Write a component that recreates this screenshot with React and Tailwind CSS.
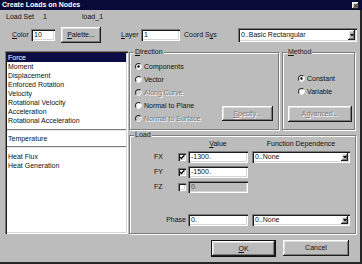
import React from "react";

const SUNKEN =
  "shadow-[inset_1px_1px_0_#7b7b7b,inset_2px_2px_0_#1c1c1c,inset_-1px_-1px_0_#ffffff,inset_-2px_-2px_0_#d6d6d6]";
const RAISED =
  "shadow-[inset_-1px_-1px_0_#1c1c1c,inset_1px_1px_0_#ffffff,inset_-2px_-2px_0_#7b7b7b,inset_2px_2px_0_#dedede]";
const DIS = "text-[#7b7b7b] [text-shadow:1px_1px_0_#ffffff]";
const GROUP =
  "border border-[#7b7b7b] shadow-[1px_1px_0_#ffffff,inset_1px_1px_0_#ffffff]";

function U({ children }) {
  return <span className="underline underline-offset-[1px]">{children}</span>;
}

function Radio({ checked, disabled }) {
  return (
    <svg width="7" height="7" viewBox="0 0 14 14" className="shrink-0">
      <circle cx="7" cy="7" r="6" fill={disabled ? "#cfcfcf" : "#ffffff"} />
      <path d="M2.76 11.24 A6 6 0 0 1 11.24 2.76" stroke="#2e2e2e" strokeWidth="2.2" fill="none" />
      <path d="M11.24 2.76 A6 6 0 0 1 2.76 11.24" stroke="#f4f4f4" strokeWidth="2" fill="none" />
      {checked && <circle cx="7" cy="7" r="2.4" fill="#000" />}
    </svg>
  );
}

function Check({ checked }) {
  return (
    <span className={`w-[8px] h-[8px] bg-white ${SUNKEN} flex items-center justify-center shrink-0`}>
      {checked && (
        <svg width="6" height="6" viewBox="0 0 7 7">
          <path d="M1 3.3 L2.8 5.2 L6.2 1.4" stroke="#000" strokeWidth="1.5" fill="none" />
        </svg>
      )}
    </span>
  );
}

function Select({ value, className }) {
  return (
    <div className={`bg-white ${SUNKEN} flex items-center pl-[3px] pr-[2px] ${className}`}>
      <span className="flex-1 whitespace-nowrap">{value}</span>
      <span className={`w-[7px] h-[calc(100%-4px)] bg-[#bcbcbc] ${RAISED} flex items-center justify-center`}>
        <svg width="4" height="3" viewBox="0 0 4 3">
          <path d="M0 0H4L2 2.6Z" fill="#000" />
        </svg>
      </span>
    </div>
  );
}

function RadioRow({ label, checked, disabled, h = "h-[13px]" }) {
  return (
    <div className={`flex items-center gap-[2px] ${h}`}>
      <Radio checked={checked} disabled={disabled} />
      <span className={disabled ? DIS : ""}>{label}</span>
    </div>
  );
}

export default function App() {
  const listTop = [
    "Force",
    "Moment",
    "Displacement",
    "Enforced Rotation",
    "Velocity",
    "Rotational Velocity",
    "Acceleration",
    "Rotational Acceleration",
  ];
  return (
    <div className="w-[362px] h-[264px] bg-[#bcbcbc] flex flex-col font-['Liberation_Sans',Arial,sans-serif] text-[7px] leading-[8px] text-[#111] overflow-hidden">
      {/* title bar */}
      <div className="h-[10px] bg-[#0a0a38] flex items-center justify-between pl-[2px] pr-[3px] shrink-0">
        <span className="text-white font-bold text-[7px] leading-[8px] whitespace-nowrap">
          Create Loads on Nodes
        </span>
        <span className={`w-[7px] h-[7px] bg-[#bcbcbc] ${RAISED} flex items-center justify-center text-[7px] leading-[7px] font-bold`}>
          ×
        </span>
      </div>

      <div className="flex-1 flex flex-col border-r-2 border-b-2 border-r-[#262626] border-b-[#262626]">
        {/* Load set row */}
        <div className="mt-[3px] h-[8px] flex whitespace-nowrap">
          <span className="ml-[6px] w-[37px]">Load Set</span>
          <span className="w-[39px]">1</span>
          <span>load_1</span>
        </div>

        {/* color / layer / coord row */}
        <div className="mt-[6px] h-[16px] flex items-center whitespace-nowrap">
          <span className="ml-[12px] w-[19px]">
            <U>C</U>olor
          </span>
          <div className={`w-[24px] h-[12px] bg-white ${SUNKEN} flex items-center pl-[3px]`}>10</div>
          <div className={`ml-[6px] w-[40px] h-[16px] ${RAISED} flex items-center justify-center`}>
            <span>
              <U>P</U>alette...
            </span>
          </div>
          <span className="ml-[20px] w-[20px]">
            <U>L</U>ayer
          </span>
          <div className={`w-[39px] h-[12px] bg-white ${SUNKEN} flex items-center pl-[3px]`}>1</div>
          <span className="ml-[4px] w-[54px]">
            Coord S<U>y</U>s
          </span>
          <Select value="0..Basic Rectangular" className="w-[119px] h-[14px]" />
        </div>

        {/* main */}
        <div className="mt-[5px] h-[186px] flex items-start">
          {/* list */}
          <div className={`ml-[5px] mt-[3px] w-[123px] h-[183px] bg-white ${SUNKEN} p-[2px] flex flex-col`}>
            {listTop.map((t, i) => (
              <div
                key={t}
                className={`h-[9px] leading-[9px] pl-[1px] whitespace-nowrap ${i === 0 ? "bg-[#0c0c46] text-white" : ""}`}
              >
                {t}
              </div>
            ))}
            <div className="mt-[4px] h-[2px] border-t border-t-[#7b7b7b] border-b border-b-[#e8e8e8]" />
            <div className="mt-[3px] h-[9px] leading-[9px] pl-[1px]">Temperature</div>
            <div className="mt-[3px] h-[2px] border-t border-t-[#7b7b7b] border-b border-b-[#e8e8e8]" />
            <div className="mt-[4px] h-[9px] leading-[9px] pl-[1px]">Heat Flux</div>
            <div className="h-[9px] leading-[9px] pl-[1px]">Heat Generation</div>
          </div>

          {/* right column */}
          <div className="ml-[1px] w-[228px] flex flex-col">
            <div className="flex gap-[3px]">
              <fieldset className={`w-[150px] h-[82px] ${GROUP}`}>
                <legend className="ml-[4px] px-[1px] leading-[8px] bg-[#bcbcbc]">
                  <U>D</U>irection
                </legend>
                <div className="flex items-end">
                  <div className="pl-[5px] pt-[4px] flex flex-col">
                    <RadioRow label="Components" checked />
                    <RadioRow label="Vector" />
                    <RadioRow label="Along Curve" disabled />
                    <RadioRow label="Normal to Plane" />
                    <RadioRow label="Normal to Surface" disabled />
                  </div>
                  <div
                    className={`ml-auto mr-[5px] mb-[4px] w-[51px] h-[15px] ${RAISED} flex items-center justify-center ${DIS}`}
                  >
                    <span>
                      <U>S</U>pecify...
                    </span>
                  </div>
                </div>
              </fieldset>
              <fieldset className={`w-[73px] h-[82px] ${GROUP}`}>
                <legend className="ml-[4px] px-[1px] leading-[8px] bg-[#bcbcbc]">
                  <U>M</U>ethod
                </legend>
                <div className="pl-[15px] pt-[16px] flex flex-col">
                  <RadioRow label="Constant" checked />
                  <RadioRow label="Variable" />
                </div>
                <div
                  className={`ml-[5px] mt-[8px] w-[64px] h-[16px] ${RAISED} flex items-center justify-center ${DIS}`}
                >
                  <span>
                    A<U>d</U>vanced...
                  </span>
                </div>
              </fieldset>
            </div>

            <fieldset className={`mt-[1px] w-[227px] h-[103px] ${GROUP}`}>
              <legend className="ml-[4px] px-[1px] leading-[8px] bg-[#bcbcbc]">Load</legend>
              <div className="mt-[1px] h-[8px] flex pl-[58px] whitespace-nowrap">
                <span className="w-[60px] text-center">
                  <U>V</U>alue
                </span>
                <span className="ml-[4px] w-[98px] text-center">Function Dependence</span>
              </div>
              {[
                { l: "FX", c: true, v: "-1300.", f: true },
                { l: "FY", c: true, v: "-1500." },
                { l: "FZ", c: false, v: "0.", d: true },
              ].map((r) => (
                <div key={r.l} className="mt-[3px] mb-[1px] h-[12px] flex items-center">
                  <div className="w-[56px] pl-[24px] flex items-center">
                    <span className="w-[24px]">{r.l}</span>
                    <Check checked={r.c} />
                  </div>
                  <div
                    className={`ml-[2px] w-[60px] h-[12px] ${r.d ? "bg-[#bcbcbc] text-[#555]" : "bg-white"} ${SUNKEN} flex items-center pl-[3px]`}
                  >
                    {r.v}
                  </div>
                  {r.f && <Select value="0..None" className="ml-[4px] w-[98px] h-[12px]" />}
                </div>
              ))}
              <div className="mt-[21px] h-[12px] flex items-center">
                <span className="w-[56px] text-right">Phase</span>
                <div className={`ml-[2px] w-[60px] h-[12px] bg-white ${SUNKEN} flex items-center pl-[3px]`}>
                  0.
                </div>
                <Select value="0..None" className="ml-[4px] w-[98px] h-[12px]" />
              </div>
            </fieldset>
          </div>
        </div>

        {/* buttons */}
        <div className="mt-[6px] flex items-start pl-[211px]">
          <div className={`w-[65px] h-[17px] border border-[#111] ${RAISED} flex items-center justify-center`}>
            <span>
              <U>O</U>K
            </span>
          </div>
          <div className={`ml-[7px] w-[66px] h-[16px] ${RAISED} flex items-center justify-center`}>
            Cancel
          </div>
        </div>
      </div>
    </div>
  );
}
